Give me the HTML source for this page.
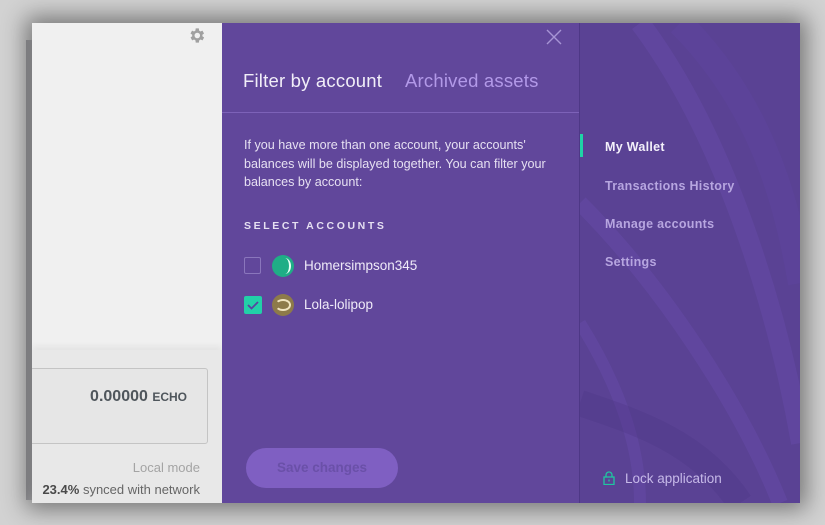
<!DOCTYPE html>
<html><head><style>
*{margin:0;padding:0;box-sizing:border-box}
html,body{width:825px;height:525px;overflow:hidden}
body{background:#d2d2d2;position:relative;font-family:"Liberation Sans",sans-serif}
.win{position:absolute;left:32px;top:23px;width:768px;height:480px;box-shadow:0 0 22px 6px rgba(0,0,0,0.45)}
.edge{position:absolute;left:26px;top:40px;width:6px;height:460px;background:linear-gradient(90deg,#a0a0a4,#b8b8bc)}
.left{position:absolute;left:0;top:0;width:190px;height:480px;background:#f0f0f0;overflow:hidden}
.lb{position:absolute;left:0;top:327px;width:190px;height:153px;background:#e8e8e8;box-shadow:0 -4px 6px rgba(0,0,0,0.05)}
.box{position:absolute;left:-2px;top:18px;width:178px;height:76px;border:1px solid #c4c4c4;border-radius:3px;background:#e6e6e6}
.mid{position:absolute;left:190px;top:0;width:357px;height:480px;background:#61479b}
.right{position:absolute;left:547px;top:0;width:221px;height:480px;background:#5a4294;overflow:hidden;border-left:1px solid #4e3886}
</style></head><body>
<div class="edge"></div>
<div class="win">
 <div class="left">
  <svg style="position:absolute;left:155px;top:3px" width="19" height="19" viewBox="0 0 24 24"><path fill="#a0a0a0" d="M19.4 13a7.5 7.5 0 0 0 0-2l2.1-1.6-2-3.5-2.5 1a7.6 7.6 0 0 0-1.7-1L15 3h-4l-.4 2.9a7.6 7.6 0 0 0-1.7 1l-2.5-1-2 3.5L6.6 11a7.5 7.5 0 0 0 0 2l-2.1 1.6 2 3.5 2.5-1a7.6 7.6 0 0 0 1.7 1L11 21h4l.4-2.9a7.6 7.6 0 0 0 1.7-1l2.5 1 2-3.5zM13 15.5a3.5 3.5 0 1 1 0-7 3.5 3.5 0 0 1 0 7z"/></svg>
  <div class="lb">
   <div class="box"><div style="position:absolute;right:20px;top:19px;font-size:16px;font-weight:bold;color:#4f565c">0.00000 <span style="font-size:12px">ECHO</span></div></div>
   <div style="position:absolute;right:22px;top:110px;font-size:13px;color:#a4a4a4">Local mode</div>
   <div style="position:absolute;right:22px;top:132px;font-size:13px;color:#666"><b style="color:#4a4a4a">23.4%</b> synced with network</div>
  </div>
 </div>
 <div class="mid">
  <svg style="position:absolute;left:323px;top:5px" width="18" height="18" viewBox="0 0 18 18"><path d="M2 2L16 16M16 2L2 16" stroke="#a794d4" stroke-width="1.4"/></svg>
  <div style="position:absolute;left:21px;top:47px;font-size:18.5px;color:#f1eef8;letter-spacing:0.2px">Filter by account</div>
  <div style="position:absolute;left:183px;top:47px;font-size:18.5px;color:#b299e8;letter-spacing:0.2px">Archived assets</div>
  <div style="position:absolute;left:0;top:89px;width:357px;height:1px;background:#7d62b8"></div>
  <div style="position:absolute;left:22px;top:113px;width:330px;font-size:12.6px;line-height:18.5px;color:#e6e0f2">If you have more than one account, your accounts' balances will be displayed together. You can filter your balances by account:</div>
  <div style="position:absolute;left:22px;top:197px;font-size:10.5px;font-weight:bold;letter-spacing:2.6px;color:#e6e0f2">SELECT ACCOUNTS</div>
  <div style="position:absolute;left:22px;top:234px;width:17px;height:17px;border:1.5px solid #8a76bc;border-radius:2px"></div>
  <div style="position:absolute;left:50px;top:232px;width:22px;height:22px;border-radius:50%;background:#1fae86;overflow:hidden"><div style="position:absolute;left:7px;top:3px;width:12px;height:16px;border-right:2px solid #e8fff6;border-radius:50%"></div></div>
  <div style="position:absolute;left:82px;top:235px;font-size:13.5px;color:#efeaf8">Homersimpson345</div>
  <div style="position:absolute;left:22px;top:273px;width:18px;height:18px;background:#22d0a8;border-radius:2px"><svg width="18" height="18" viewBox="0 0 18 18"><path d="M4 9l3.5 3.5L14 6" stroke="#5a42a0" stroke-width="1.8" fill="none"/></svg></div>
  <div style="position:absolute;left:50px;top:271px;width:22px;height:22px;border-radius:50%;background:#8d7a4a;overflow:hidden"><div style="position:absolute;left:3px;top:5px;width:16px;height:12px;border:2px solid #efe3c0;border-radius:50%;border-left-color:transparent"></div></div>
  <div style="position:absolute;left:82px;top:274px;font-size:13.5px;color:#efeaf8">Lola-lolipop</div>
  <div style="position:absolute;left:24px;top:425px;width:152px;height:40px;border-radius:20px;background:#7f5fc2;color:#6a50a8;font-size:13.5px;text-align:center;line-height:40px;font-weight:bold">Save changes</div>
 </div>
 <div class="right">
  <svg style="position:absolute;left:0;top:0" width="221" height="480" viewBox="0 0 221 480">
   <path d="M60 0 C150 120 200 300 221 420" stroke="#6549a8" stroke-width="20" fill="none" opacity=".5"/>
   <path d="M0 180 C80 260 160 380 200 480" stroke="#6549a8" stroke-width="16" fill="none" opacity=".5"/>
   <path d="M0 300 C50 380 60 440 60 480" stroke="#6549a8" stroke-width="12" fill="none" opacity=".5"/>
   <path d="M100 0 C190 90 210 200 221 260" stroke="#5f46a0" stroke-width="26" fill="none" opacity=".4"/>
   <path d="M0 380 C60 400 120 420 160 480" stroke="#4d3584" stroke-width="26" fill="none" opacity=".3"/>
  </svg>
  <div style="position:absolute;left:-2px;top:111px;width:5px;height:23px;background:#1fd3a6"></div>
  <div style="position:absolute;left:25px;top:117px;font-size:12.5px;font-weight:bold;color:#f3f0fa;letter-spacing:0.3px">My Wallet</div>
  <div style="position:absolute;left:25px;top:156px;font-size:12.5px;font-weight:bold;color:#b7a6e0;letter-spacing:0.3px">Transactions History</div>
  <div style="position:absolute;left:25px;top:194px;font-size:12.5px;font-weight:bold;color:#b7a6e0;letter-spacing:0.3px">Manage accounts</div>
  <div style="position:absolute;left:25px;top:232px;font-size:12.5px;font-weight:bold;color:#b7a6e0;letter-spacing:0.3px">Settings</div>
  <svg style="position:absolute;left:23px;top:448px" width="12" height="14" viewBox="0 0 12 14"><rect x="1" y="6" width="10" height="7.5" fill="none" stroke="#1fc6a0" stroke-width="1.3"/><path d="M3 6V4a3 3 0 0 1 6 0v2" fill="none" stroke="#1fc6a0" stroke-width="1.3"/><path d="M6 8.5v2" stroke="#1fc6a0" stroke-width="1.3"/></svg>
  <div style="position:absolute;left:45px;top:448px;font-size:13.5px;color:#c6b9e8">Lock application</div>
 </div>
</div>
</body></html>
